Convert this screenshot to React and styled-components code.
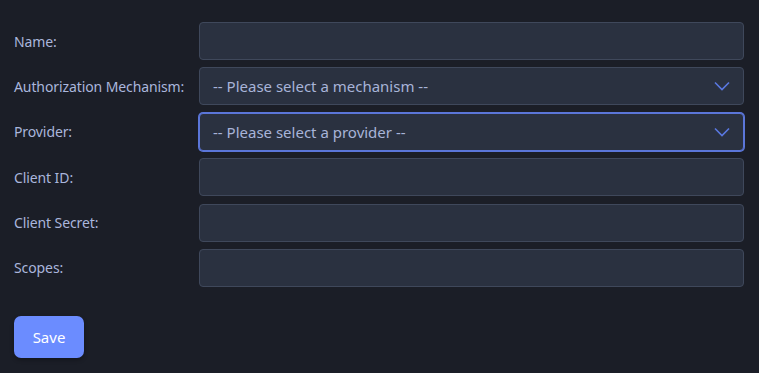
import React from "react";
import styled, { createGlobalStyle } from "styled-components";

const Global = createGlobalStyle`
  html, body { margin: 0; padding: 0; background: #1b1e27; }
  body { font-family: "Noto Sans", "DejaVu Sans", sans-serif; }
`;

const Form = styled.form`
  padding: 22px 15px 15px 14px;
  display: flex;
  flex-direction: column;
`;

const Fields = styled.div`
  display: grid;
  grid-template-columns: 185px 1fr;
  row-gap: 7.4px;
  align-items: center;
`;

const Label = styled.label`
  color: #aab6dc;
  font-size: 14px;
  letter-spacing: -0.1px;
`;

const Field = styled.div`
  position: relative;
  height: 38px;
  box-sizing: border-box;
  background: #2a3140;
  border: 1px solid ${(p) => (p.$focused ? "#5b76d9" : "#3f485b")};
  box-shadow: ${(p) => (p.$focused ? "0 0 0 1px #5b76d9" : "none")};
  border-radius: 4px;
  display: flex;
  align-items: center;
  padding: 0 13px;
  color: #a8b4d8;
  font-size: 15px;
`;

const Chevron = styled.svg`
  position: absolute;
  right: 13px;
  top: 50%;
  transform: translateY(-50%);
`;

const Save = styled.button`
  margin-top: 29px;
  align-self: flex-start;
  width: 70px;
  height: 42px;
  border: none;
  border-radius: 7px;
  background: #6b8cff;
  color: #ffffff;
  font-family: inherit;
  font-size: 15px;
  box-shadow: 0 2px 4px rgba(0,0,0,0.3);
`;

const Arrow = () => (
  <Chevron width="16" height="10" viewBox="0 0 16 10">
    <path d="M1 1.5 L8 8.5 L15 1.5" fill="none" stroke="#5a78e0" strokeWidth="1.6" />
  </Chevron>
);

const rows = [
  { label: "Name:" },
  { label: "Authorization Mechanism:", select: "-- Please select a mechanism --" },
  { label: "Provider:", select: "-- Please select a provider --", focused: true },
  { label: "Client ID:" },
  { label: "Client Secret:" },
  { label: "Scopes:" },
];

export default function App() {
  return (
    <>
      <Global />
      <Form onSubmit={(e) => e.preventDefault()}>
        <Fields>
          {rows.map((r) => (
            <React.Fragment key={r.label}>
              <Label>{r.label}</Label>
              <Field $focused={r.focused}>
                {r.select}
                {r.select && <Arrow />}
              </Field>
            </React.Fragment>
          ))}
        </Fields>
        <Save type="submit">Save</Save>
      </Form>
    </>
  );
}
